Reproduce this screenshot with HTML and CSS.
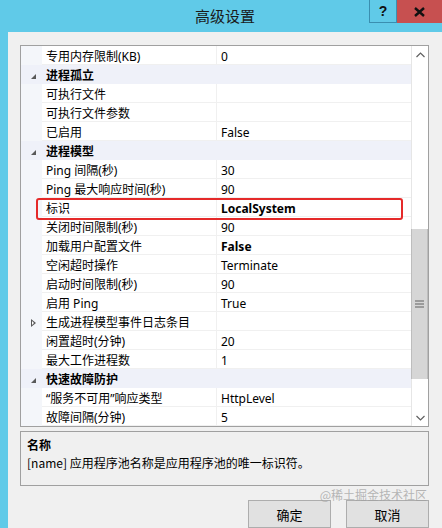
FILE: index.html
```html
<!DOCTYPE html>
<html lang="zh-CN">
<head>
    <meta charset="UTF-8">
    <meta name="viewport" content="width=device-width, initial-scale=1.0">
    <title>高级设置</title>
    <link rel="stylesheet" href="styles.css">
</head>
<body>
    <div class="window">
        <div class="titlebar">
            <div class="title">高级设置</div>
            <button class="cap-btn cap-help">?</button>
            <button class="cap-btn cap-close">
                <svg width="11" height="10" viewBox="0 0 11 10"><path d="M1 1 L10 9 M10 1 L1 9" stroke="#111" stroke-width="2.4" fill="none"/></svg>
            </button>
        </div>
        <div class="frame">
            <div class="content">
                <div class="grid">
                    <div class="rows">
                        <div class="row"><span class="gutter"></span><span class="name">专用内存限制(KB)</span><span class="value">0</span></div>
                        <div class="row cat"><span class="gutter"><i class="tri-open"></i></span><span class="name">进程孤立</span></div>
                        <div class="row"><span class="gutter"></span><span class="name">可执行文件</span><span class="value"></span></div>
                        <div class="row"><span class="gutter"></span><span class="name">可执行文件参数</span><span class="value"></span></div>
                        <div class="row"><span class="gutter"></span><span class="name">已启用</span><span class="value">False</span></div>
                        <div class="row cat"><span class="gutter"><i class="tri-open"></i></span><span class="name">进程模型</span></div>
                        <div class="row"><span class="gutter"></span><span class="name">Ping 间隔(秒)</span><span class="value">30</span></div>
                        <div class="row"><span class="gutter"></span><span class="name">Ping 最大响应时间(秒)</span><span class="value">90</span></div>
                        <div class="row"><span class="gutter"></span><span class="name">标识</span><span class="value bold">LocalSystem</span></div>
                        <div class="row"><span class="gutter"></span><span class="name">关闭时间限制(秒)</span><span class="value">90</span></div>
                        <div class="row"><span class="gutter"></span><span class="name">加载用户配置文件</span><span class="value bold">False</span></div>
                        <div class="row"><span class="gutter"></span><span class="name">空闲超时操作</span><span class="value">Terminate</span></div>
                        <div class="row"><span class="gutter"></span><span class="name">启动时间限制(秒)</span><span class="value">90</span></div>
                        <div class="row"><span class="gutter"></span><span class="name">启用 Ping</span><span class="value">True</span></div>
                        <div class="row"><span class="gutter"><i class="tri-closed"></i></span><span class="name">生成进程模型事件日志条目</span><span class="value"></span></div>
                        <div class="row"><span class="gutter"></span><span class="name">闲置超时(分钟)</span><span class="value">20</span></div>
                        <div class="row"><span class="gutter"></span><span class="name">最大工作进程数</span><span class="value">1</span></div>
                        <div class="row cat"><span class="gutter"><i class="tri-open"></i></span><span class="name">快速故障防护</span></div>
                        <div class="row"><span class="gutter"></span><span class="name">“服务不可用”响应类型</span><span class="value">HttpLevel</span></div>
                        <div class="row"><span class="gutter"></span><span class="name">故障间隔(分钟)</span><span class="value">5</span></div>
                        <div class="highlight"></div>
                    </div>
                    <div class="scrollbar">
                        <div class="sb-arrow">
                            <svg width="9" height="6" viewBox="0 0 9 6"><path d="M0.5 5 L4.5 1 L8.5 5" stroke="#606060" stroke-width="1.2" fill="none"/></svg>
                        </div>
                        <div class="sb-track-top"></div>
                        <div class="sb-thumb">
                            <svg width="9" height="8" viewBox="0 0 9 8"><path d="M0 1 H9 M0 4 H9 M0 7 H9" stroke="#606060" stroke-width="1.2"/></svg>
                        </div>
                        <div class="sb-track-bottom"></div>
                        <div class="sb-arrow">
                            <svg width="9" height="6" viewBox="0 0 9 6"><path d="M0.5 1 L4.5 5 L8.5 1" stroke="#606060" stroke-width="1.2" fill="none"/></svg>
                        </div>
                    </div>
                </div>
                <div class="desc">
                    <div class="desc-title">名称</div>
                    <div class="desc-text">[name] 应用程序池名称是应用程序池的唯一标识符。</div>
                </div>
                <div class="buttons">
                    <button class="btn">确定</button>
                    <button class="btn">取消</button>
                    <span class="watermark">@稀土掘金技术社区</span>
                </div>
            </div>
        </div>
    </div>
</body>
</html>
```

FILE: styles.css
```css
body {
    margin: 0;
    padding: 0;
    width: 442px;
    height: 528px;
    overflow: hidden;
    font-family: "Segoe UI", "Noto Sans", "Noto Sans CJK SC", sans-serif;
    font-size: 12px;
    color: #000;
    background-color: #f0f0f0;
}
.window {
    display: flex;
    flex-direction: column;
    height: 528px;
}
.titlebar {
    display: flex;
    align-items: flex-start;
    height: 32px;
    background-color: #60cae8;
    flex-shrink: 0;
}
.title {
    flex: 1;
    padding-left: 81px;
    text-align: center;
    font-family: "Noto Sans CJK SC", sans-serif;
    font-size: 15px;
    line-height: 32px;
    color: #1a1a1a;
}
.cap-btn {
    height: 23px;
    border: none;
    padding: 0;
    margin: 0;
    display: flex;
    align-items: center;
    justify-content: center;
    font-family: "Liberation Sans", sans-serif;
}
.cap-help {
    width: 28px;
    background-color: #60cae8;
    border: 1px solid #3a8fb0;
    border-top: none;
    font-weight: bold;
    font-size: 14px;
    color: #111;
}
.cap-close {
    width: 45px;
    background-color: #c75050;
}
.frame {
    flex: 1;
    display: flex;
    border-left: 8px solid #60cae8;
    min-height: 0;
}
.content {
    flex: 1;
    display: flex;
    flex-direction: column;
    padding: 13px 13px 0 12px;
    background-color: #f0f0f0;
}
.grid {
    display: flex;
    height: 382px;
    border: 1px solid #a0a0a0;
    background-color: #fff;
    box-sizing: border-box;
}
.rows {
    position: relative;
    flex: 1;
    display: flex;
    flex-direction: column;
}
.row {
    display: flex;
    height: 19px;
    white-space: nowrap;
}
.gutter {
    width: 21px;
    flex-shrink: 0;
    background-color: #f4f6fa;
    display: flex;
    align-items: center;
    justify-content: center;
}
.name,
.value {
    box-sizing: border-box;
    padding-top: 2px;
    line-height: 18px;
    padding-left: 4px;
    border-bottom: 1px solid #f0f0f0;
}
.name {
    width: 174px;
    flex-shrink: 0;
}
.value {
    flex: 1;
    border-left: 1px solid #f0f0f0;
}
.bold {
    font-weight: bold;
}
.row.cat {
    background-color: #eff1f9;
}
.row.cat .name {
    flex: 1;
    font-weight: bold;
    border-bottom: none;
    background-color: #eff1f9;
}
.row.cat .gutter {
    background-color: #eff1f9;
}
.tri-open {
    width: 0;
    height: 0;
    border-left: 5px solid transparent;
    border-bottom: 5px solid #595959;
    margin-left: 4px;
    margin-top: 4px;
}
.tri-closed {
    width: 0;
    height: 0;
    border-top: 4px solid transparent;
    border-bottom: 4px solid transparent;
    border-left: 5px solid #595959;
    position: relative;
    margin-left: 4px;
    margin-top: 2px;
}
.tri-closed::after {
    content: "";
    position: absolute;
    left: -4px;
    top: -2px;
    border-top: 2px solid transparent;
    border-bottom: 2px solid transparent;
    border-left: 2.5px solid #fff;
}
.highlight {
    position: absolute;
    left: 15px;
    top: 152px;
    width: 363px;
    height: 18px;
    border: 2px solid #e52a2a;
    border-radius: 3px;
}
.scrollbar {
    width: 16px;
    display: flex;
    flex-direction: column;
    border-left: 1px solid #e6e6e6;
    background-color: #fff;
}
.sb-arrow {
    height: 17px;
    display: flex;
    align-items: center;
    justify-content: center;
}
.sb-track-top {
    height: 166px;
}
.sb-thumb {
    height: 150px;
    background-color: #d6d6d6;
    border-left: 1px solid #bdbdbd;
    border-right: 1px solid #bdbdbd;
    margin-left: -1px;
    display: flex;
    align-items: center;
    justify-content: center;
}
.sb-track-bottom {
    flex: 1;
}
.desc {
    margin-top: 4px;
    height: 58px;
    border: 1px solid #a0a0a0;
    box-sizing: border-box;
    padding: 3px 6px;
    font-family: "Noto Sans CJK SC", sans-serif;
}
.desc-title {
    font-weight: bold;
    line-height: 19px;
}
.desc-text {
    line-height: 18px;
}
.buttons {
    position: relative;
    display: flex;
    justify-content: flex-end;
    gap: 15px;
    margin-top: 14px;
}
.btn {
    width: 83px;
    height: 28px;
    background-color: #e1e1e1;
    border: 1px solid #adadad;
    font-family: "Noto Sans CJK SC", sans-serif;
    font-size: 13px;
    color: #000;
    padding: 0;
}
.watermark {
    position: absolute;
    right: 2px;
    top: -12px;
    line-height: 14px;
    font-family: "Noto Sans CJK SC", sans-serif;
    font-size: 12px;
    color: rgba(160, 160, 160, 0.75);
}
```
